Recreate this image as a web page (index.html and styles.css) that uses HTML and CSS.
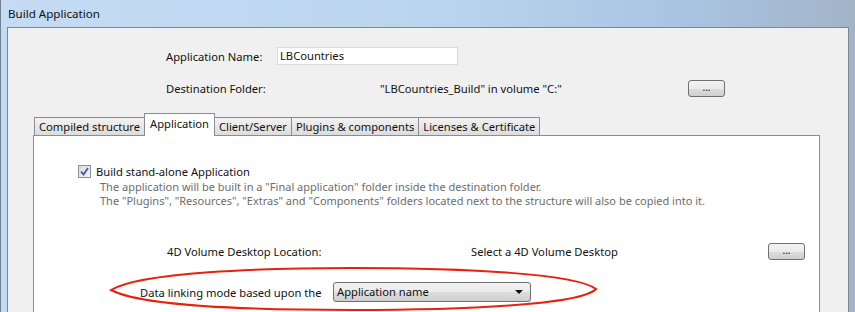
FILE: index.html
```html
<!DOCTYPE html>
<html lang="en">
<head>
  <meta charset="UTF-8" />
  <title>Build Application</title>
  <link rel="stylesheet" href="styles.css">
</head>
<body>

  <div class="window">
    <div class="titlebar">Build Application</div>

    <div class="frame">
      <div class="content">

        <!-- top fields -->
        <div class="row row-name">
          <span class="label">Application Name:</span>
          <span class="input">LBCountries</span>
        </div>
        <div class="row row-dest">
          <span class="label">Destination Folder:</span>
          <span class="value">"LBCountries_Build" in volume "C:"</span>
          <span class="btn">...</span>
        </div>

        <!-- tabs -->
        <div class="tabs">
          <span class="tab">Compiled structure</span>
          <span class="tab active">Application</span>
          <span class="tab">Client/Server</span>
          <span class="tab">Plugins &amp; components</span>
          <span class="tab">Licenses &amp; Certificate</span>
        </div>

        <div class="panel">
          <div class="check-row">
            <span class="checkbox">
              <svg width="9" height="9" viewBox="0 0 9 9"><path d="M1 4.5 L3.5 7.5 L8 1" fill="none" stroke="#3a5aa8" stroke-width="1.8"/></svg>
            </span>
            <span>Build stand-alone Application</span>
          </div>
          <div class="desc">
            The application will be built in a "Final application" folder inside the destination folder.<br>
            The "Plugins", "Resources", "Extras" and "Components" folders located next to the structure will also be copied into it.
          </div>

          <div class="row row-vol">
            <span class="label">4D Volume Desktop Location:</span>
            <span class="value">Select a 4D Volume Desktop</span>
            <span class="btn">...</span>
          </div>

          <div class="row row-link">
            <span class="label">Data linking mode based upon the</span>
            <span class="select">Application name<span class="arrow"></span></span>
          </div>
        </div>

      </div>
    </div>

    <!-- red annotation -->
    <svg class="mark" width="855" height="312" viewBox="0 0 855 312">
      <path d="M110 290 C 140 272 260 268 350 268 C 470 268 575 274 595 289 C 580 305 460 310 350 310 C 240 310 140 306 110 290 Z" fill="none" stroke="#e8200c" stroke-width="2"/>
    </svg>
  </div>

</body>
</html>
```

FILE: styles.css
```css
body {
  margin: 0;
  font-family: "Noto Sans", "Open Sans", sans-serif;
  font-size: 11.2px;
  color: #111;
}

.window {
  position: relative;
  width: 855px;
  height: 312px;
  overflow: hidden;
  background: linear-gradient(to right, #c4dbf3 0%, #bcd5ef 50%, #a9c4e2 80%, #a3b4c8 100%);
  border-left: 1px solid #6f8193;
  box-sizing: border-box;
}

.titlebar {
  height: 27px;
  line-height: 28px;
  padding-left: 7px;
  font-size: 11.6px;
  color: #111;
}

.frame {
  margin: 0 6px 0 6px;
  border: 1px solid #7b8794;
  border-bottom: none;
  height: 285px;
  background: #f0f0f0;
}

.content {
  padding-top: 19px;
}

.row {
  display: flex;
  align-items: center;
  height: 18px;
  white-space: nowrap;
}

.row-name {
  padding-left: 158px;
}

.row-name .label {
  width: 111px;
}

.input {
  width: 177px;
  height: 16px;
  line-height: 16px;
  padding-left: 2px;
  background: #fff;
  border: 1px solid #d9dde3;
}

.row-dest {
  margin-top: 14px;
  padding-left: 158px;
}

.row-dest .label {
  width: 214px;
}

.row-dest .value {
  width: 308px;
}

.btn {
  width: 35px;
  height: 15px;
  line-height: 12px;
  text-align: center;
  font-size: 10px;
  border: 1px solid #707070;
  border-radius: 3px;
  background: linear-gradient(#f2f2f2 0%, #ebebeb 50%, #dddddd 51%, #cfcfcf 100%);
}

.tabs {
  display: flex;
  align-items: flex-end;
  margin-top: 17px;
  padding-left: 26px;
  height: 21px;
  white-space: nowrap;
}

.tab {
  height: 17px;
  line-height: 17px;
  padding: 0 4px;
  border: 1px solid #898c95;
  border-bottom: none;
  border-left: none;
  background: linear-gradient(#f2f2f2, #dcdcdc);
}

.tab:first-child {
  border-left: 1px solid #898c95;
}

.tab.active {
  height: 22px;
  line-height: 20px;
  padding: 0 5px;
  margin-bottom: -1px;
  margin-left: -1px;
  border-left: 1px solid #898c95;
  background: #fff;
  position: relative;
  z-index: 1;
}

.panel {
  margin-left: 25px;
  width: 787px;
  height: 200px;
  background: #fff;
  border: 1px solid #898c95;
  padding-top: 28px;
  box-sizing: border-box;
}

.check-row {
  display: flex;
  align-items: center;
  padding-left: 44px;
  height: 14px;
}

.checkbox {
  width: 11px;
  height: 11px;
  border: 1px solid #8f8f8f;
  background: linear-gradient(135deg, #dcdcdc, #f6f6f6);
  margin-right: 5px;
  display: flex;
  align-items: center;
  justify-content: center;
}

.desc {
  padding-left: 66px;
  margin-top: 2px;
  font-size: 11px;
  line-height: 14px;
  color: #6d6d6d;
}

.row-vol {
  margin-top: 34px;
  padding-left: 133px;
}

.row-vol .label {
  width: 304px;
}

.row-vol .value {
  width: 297px;
}

.row-link {
  margin-top: 22px;
  padding-left: 106px;
  height: 20px;
}

.row-link .label {
  width: 193px;
}

.select {
  position: relative;
  width: 193px;
  height: 18px;
  line-height: 18px;
  padding-left: 3px;
  border: 1px solid #707070;
  border-radius: 3px;
  background: linear-gradient(#f2f2f2 0%, #ebebeb 50%, #dddddd 51%, #cfcfcf 100%);
}

.arrow {
  position: absolute;
  right: 7px;
  top: 7px;
  border-left: 4px solid transparent;
  border-right: 4px solid transparent;
  border-top: 4px solid #111;
}

.mark {
  position: absolute;
  left: 0;
  top: 0;
  pointer-events: none;
}
```
